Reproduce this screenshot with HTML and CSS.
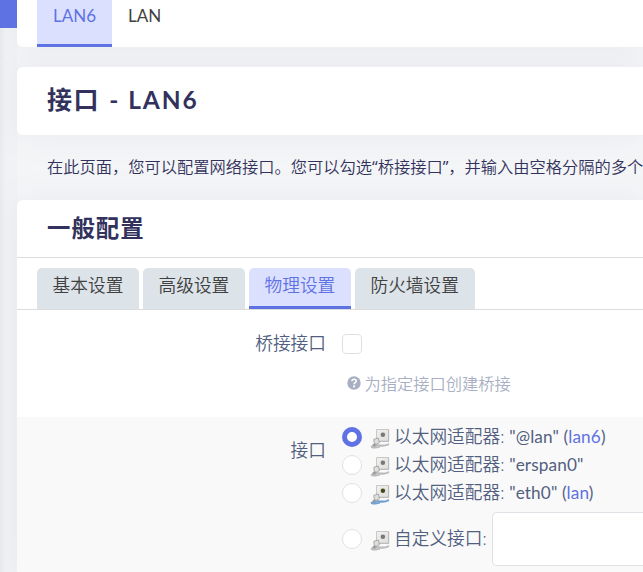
FILE: index.html
```html
<!DOCTYPE html>
<html lang="zh-CN">
<head>
<meta charset="utf-8">
<title>接口 - LAN6</title>
<link rel="stylesheet" href="styles.css">
</head>
<body>
<svg class="defs" aria-hidden="true">
  <defs>
    <linearGradient id="plate" x1="0" y1="0" x2="1" y2="1"><stop offset="0" stop-color="#f2f2f1"/><stop offset="1" stop-color="#dededd"/></linearGradient>
    <symbol id="port" viewBox="0 0 20 21">
      <path d="M6.5 1.5h12v11.7h-12z" fill="url(#plate)" stroke="#c8c8c5"/>
      <path d="M18.7 1.5v11.9H8" fill="none" stroke="#b4b4b4" stroke-width=".8"/>
      <path d="M9.8 4.2h6v5.2h-6z" fill="#e2e2e0"/>
      <circle class="jack" cx="12.9" cy="6.8" r="2.2"/>
      <path class="cable" d="M1.8 18.8c3-.3 3.6-1.7 6.4-1.5 4 .2 5.8 1.4 10-.9" fill="none" stroke-width="2.2" stroke-linecap="round"/>
      <path class="cable" d="M2 19.6c3 .8 6-.6 8-.8" fill="none" stroke-width="1.5"/>
      <path d="M2 17.2l3-2.6 2.3 1.2-2.9 3z" class="tail"/>
      <path d="M3.9 11.2l4.4-1.2 1.2 4.6-3.5 1.9-2-1.8z" fill="#dededc" stroke="#a3a3a1" stroke-width=".9"/>
    </symbol>
  </defs>
</svg>
<div class="layout">
  <aside class="rail"><div class="banner"></div></aside>
  <main>
    <nav class="card top-tabs"><a class="top-tab active">LAN6</a><a class="top-tab">LAN</a></nav>
    <h2 class="card page-title">接口 <span class="name">- LAN6</span></h2>
    <p class="description">在此页面，您可以配置网络接口。您可以勾选<span class="quote">“</span>桥接接口<span class="quote">”</span>，并输入由空格分隔的多个</p>
    <section class="card settings">
      <h3>一般配置</h3>
      <nav class="tabs"><a>基本设置</a><a>高级设置</a><a class="active">物理设置</a><a>防火墙设置</a></nav>
      <div class="row bridge">
        <div class="label">桥接接口</div>
        <div class="field">
          <span class="checkbox"></span>
          <div class="hint"><svg viewBox="0 0 14 14"><circle cx="7" cy="7" r="6.7" fill="#a9afc3"/><path d="M4.9 5.1c.2-2.5 4.3-2.4 4.3 0 0 1.6-2.1 1.5-2.1 3.1" fill="none" stroke="#fff" stroke-width="1.6"/><circle cx="7.1" cy="10.4" r="1.1" fill="#fff"/></svg>为指定接口创建桥接</div>
        </div>
      </div>
      <div class="row interfaces">
        <div class="label">接口</div>
        <div class="field">
          <div class="choice"><span class="radio checked"></span><svg class="port"><use href="#port"/></svg><span>以太网适配器: <span class="latin">"@lan" (<a>lan6</a>)</span></span></div>
          <div class="choice"><span class="radio"></span><svg class="port"><use href="#port"/></svg><span>以太网适配器: <span class="latin">"erspan0"</span></span></div>
          <div class="choice"><span class="radio"></span><svg class="port up"><use href="#port"/></svg><span>以太网适配器: <span class="latin">"eth0" (<a>lan</a>)</span></span></div>
          <div class="choice custom"><span class="radio"></span><svg class="port"><use href="#port"/></svg><span>自定义接口:</span><span class="input"></span></div>
        </div>
      </div>
    </section>
  </main>
</div>
</body>
</html>
```
FILE: styles.css
```css
* { box-sizing: border-box; }
body {
  margin: 0;
  height: 572px;
  overflow: hidden;
  background: #f4f5f7;
  color: #525f7f;
  font: 350 17.7px/28px Lato, "Noto Sans CJK SC", sans-serif;
}
.defs { position: absolute; width: 0; height: 0; }
.layout { display: flex; height: 572px; }
.rail { flex: 0 0 17px; background: linear-gradient(90deg, #e9eaed, #f1f2f5 6px, #f1f2f5); }
.banner { height: 28px; background: #5e72e4; }
main { flex: 1; min-width: 0; }
.card { background: #fff; border-radius: 6px 0 0 6px; box-shadow: 0 0 32px rgba(136, 152, 170, .1); }
.top-tabs { display: flex; height: 47px; padding-left: 20px; border-radius: 0 0 0 6px; }
.top-tab { padding: 2px 16px 0; height: 47px; color: #404040; font: 400 17px/28px Lato, sans-serif; }
.top-tab.active { width: 75px; background: #dce0ff; border-bottom: 3px solid #5e72e4; color: #5e72e4; }
h2, h3, p { margin: 0; }
.page-title { height: 68px; margin-top: 20px; padding-left: 30px; color: #32325d; font-size: 25px; font-weight: 700; line-height: 65px; letter-spacing: 1.4px; }
.page-title .name { margin-left: 2px; font-size: 24.5px; letter-spacing: 1.9px; }
.description { height: 65px; padding-left: 30px; color: #32325d; font-size: 16.25px; line-height: 64px; white-space: nowrap; overflow: hidden; }
.quote { font-family: "Open Sans", sans-serif; font-weight: 400; }
.settings { height: 372px; border-radius: 6px 0 0 0; }
h3 { height: 58px; padding-left: 30px; border-bottom: 1px solid #dcdcdc; color: #32325d; font-size: 23.4px; font-weight: 700; line-height: 56px; letter-spacing: 1px; }
.tabs { display: flex; gap: 4px; height: 52px; padding: 10px 0 0 20px; border-bottom: 1px solid #dcdcdc; }
.tabs a { height: 41px; padding: 0 15.6px; border-radius: 5px 5px 0 0; background: #dce3e9; color: #404040; line-height: 36px; }
.tabs .active { background: #dce0ff; border-bottom: 3px solid #5e72e4; color: #5e72e4; }
.row { display: flex; }
.label { flex: 0 0 309px; text-align: right; }
.field { flex: 1; min-width: 0; padding-left: 16px; }
.bridge { height: 107px; padding-top: 20px; }
.checkbox { display: block; width: 20px; height: 20px; margin-top: 4px; border: 1px solid #dee2e6; border-radius: 4px; background: #fff; }
.hint { display: flex; align-items: center; margin: 16px 0 0 5px; color: #a9afc3; font-size: 16.25px; }
.hint svg { width: 14px; height: 14px; margin: -2px 3.5px 0 0; }
.interfaces { height: 155px; padding-top: 6px; background: #f9f9f9; }
.interfaces .label { padding-top: 14px; }
.choice { display: flex; align-items: center; height: 28px; white-space: nowrap; }
.radio { flex: 0 0 20px; height: 20px; margin-right: 8px; border: 1px solid #dee2e6; border-radius: 50%; background: #fff; }
.radio.checked { border: 5px solid #5e72e4; }
.port { flex: 0 0 20px; width: 20px; height: 21px; margin: 3px 4px 0 0; color: #bcbcbb; fill: #777; }
#port .cable { stroke: currentColor; }
#port .tail { fill: #999c9e; }
.port.up { color: #729fcf; fill: #484817; }
.latin { font: 400 17.2px/28px Lato, sans-serif; letter-spacing: .12px; }
.choice a { color: #5e72e4; }
.custom { height: 54px; margin-top: 5px; }
.input { flex: 1; height: 54px; margin-left: 5px; border: 1px solid #dee2e6; border-right: 0; border-radius: 5px 0 0 5px; background: #fff; }
```
